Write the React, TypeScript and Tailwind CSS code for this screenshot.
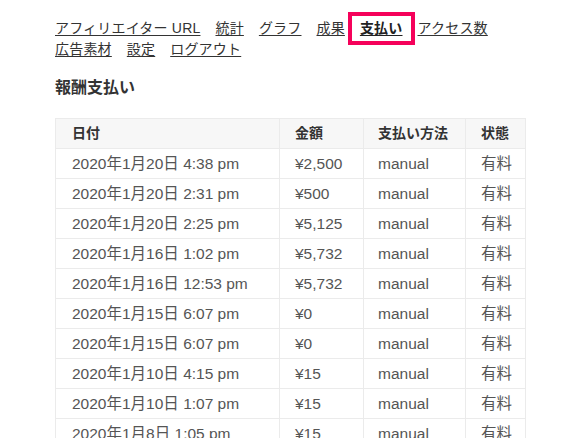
const navLinks = [
  { label: "アフィリエイター URL" },
  { label: "統計" },
  { label: "グラフ" },
  { label: "成果" },
  { label: "支払い", active: true },
  { label: "アクセス数" },
  { label: "広告素材" },
  { label: "設定" },
  { label: "ログアウト" },
];

const payouts = [
  { date: "2020年1月20日 4:38 pm", amount: "¥2,500" },
  { date: "2020年1月20日 2:31 pm", amount: "¥500" },
  { date: "2020年1月20日 2:25 pm", amount: "¥5,125" },
  { date: "2020年1月16日 1:02 pm", amount: "¥5,732" },
  { date: "2020年1月16日 12:53 pm", amount: "¥5,732" },
  { date: "2020年1月15日 6:07 pm", amount: "¥0" },
  { date: "2020年1月15日 6:07 pm", amount: "¥0" },
  { date: "2020年1月10日 4:15 pm", amount: "¥15" },
  { date: "2020年1月10日 1:07 pm", amount: "¥15" },
  { date: "2020年1月8日 1:05 pm", amount: "¥15" },
];

export default function App() {
  return (
    <div className="h-[438px] overflow-hidden bg-white pl-[55px] pt-[18px] font-['Liberation_Sans','Noto_Sans_CJK_JP',sans-serif]">
      <div className="w-[470px]">
        {/* Tabs */}
        <nav className="flex flex-wrap gap-x-[15px] text-[14px] leading-[21px] tracking-[0.2px] text-[#333]">
          {navLinks.map((link) => (
            <a
              key={link.label}
              href="#"
              className={
                link.active
                  ? "relative font-bold text-[#222] underline underline-offset-2"
                  : "underline underline-offset-2"
              }
            >
              {link.label}
              {link.active && (
                <span className="pointer-events-none absolute -top-[6px] -bottom-[6px] -left-[12px] -right-[12px] border-[4px] border-[#f5015a]" />
              )}
            </a>
          ))}
        </nav>

        <h2 className="mt-[16px] text-[16px] font-bold leading-[24px] text-[#333]">報酬支払い</h2>

        {/* Payouts table */}
        <table className="mt-[18px] w-[470px] table-fixed border-collapse border border-[#ebebeb]">
          <colgroup>
            <col className="w-[224px]" />
            <col className="w-[84px]" />
            <col className="w-[102px]" />
            <col className="w-[60px]" />
          </colgroup>
          <thead>
            <tr className="bg-[#f7f7f7] text-left text-[14px] font-bold text-[#333]">
              <th className="h-[30px] border border-[#ebebeb] pl-[16px]">日付</th>
              <th className="h-[30px] border border-[#ebebeb] pl-[15px]">金額</th>
              <th className="h-[30px] border border-[#ebebeb] pl-[14px]">支払い方法</th>
              <th className="h-[30px] border border-[#ebebeb] pl-[15px]">状態</th>
            </tr>
          </thead>
          <tbody className="text-[15.5px] text-[#555]">
            {payouts.map((row, i) => (
              <tr key={i}>
                <td className="h-[30px] border border-[#ebebeb] pl-[16px] whitespace-nowrap">{row.date}</td>
                <td className="h-[30px] border border-[#ebebeb] pl-[15px]">{row.amount}</td>
                <td className="h-[30px] border border-[#ebebeb] pl-[14px]">manual</td>
                <td className="h-[30px] border border-[#ebebeb] pl-[15px]">有料</td>
              </tr>
            ))}
          </tbody>
        </table>
      </div>
    </div>
  );
}
